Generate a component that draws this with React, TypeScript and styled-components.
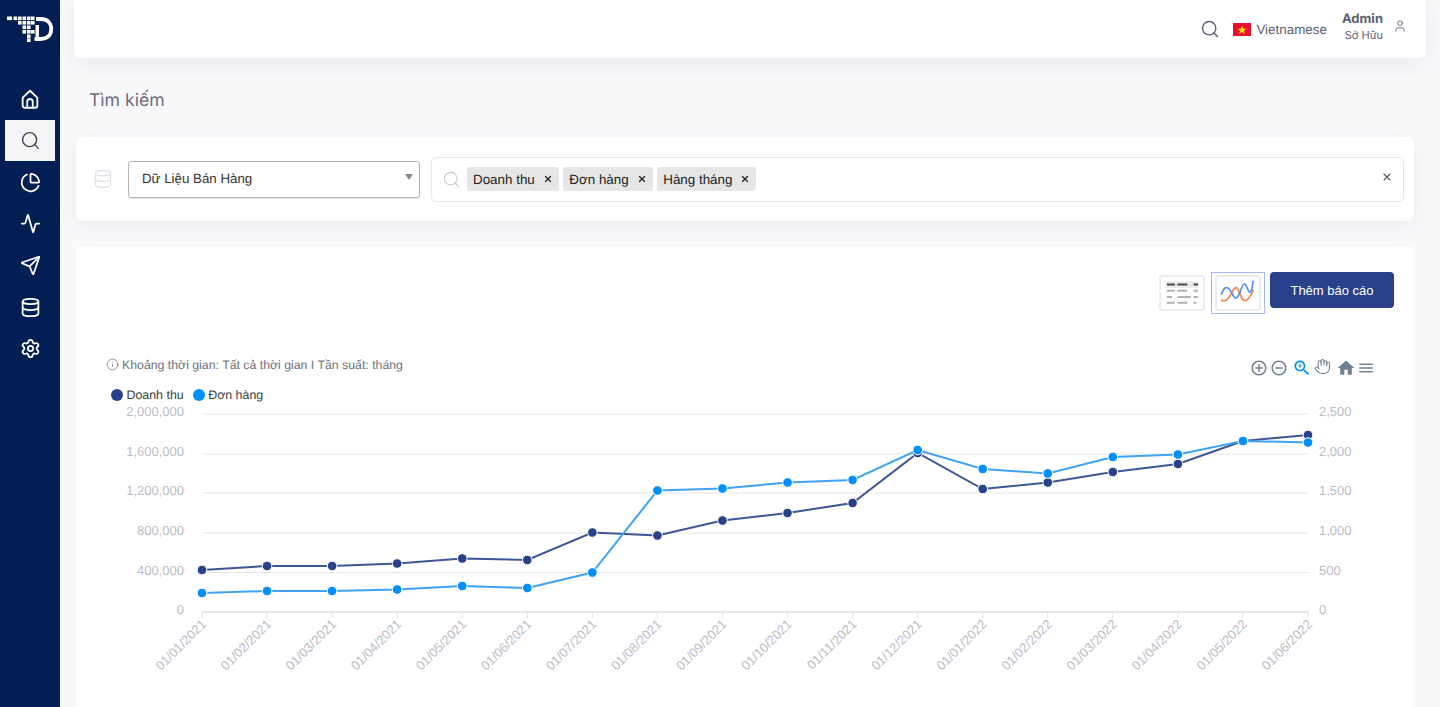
import React from "react";
import styled, { createGlobalStyle } from "styled-components";
import { Search, ChartPie, Activity, Send, Database, Settings, User, X, Info, Hand } from "lucide-react";

const Global = createGlobalStyle`
  html, body { margin: 0; padding: 0; height: 100%; background: #f8f8fb; overflow: hidden; }
  body { font-family: "Liberation Sans", Arial, sans-serif; text-rendering: geometricPrecision; }
  #root { height: 100%; }
`;

const Shell = styled.div`
  display: flex;
  width: 1440px;
  height: 707px;
  overflow: hidden;
`;
const Sidebar = styled.aside`
  flex: 0 0 60px;
  background: #031e52;
  display: flex;
  flex-direction: column;
  padding-top: 14px;
  box-sizing: border-box;
`;
const LogoMark = styled.svg`
  display: block;
  width: 50px;
  height: 28px;
  margin: 0 0 36px 5px;
`;
const Nav = styled.nav`
  display: flex;
  flex-direction: column;
  padding: 0 5px;
`;
const NavItem = styled.div<{ $active?: boolean }>`
  height: 41.7px;
  display: flex;
  align-items: center;
  justify-content: center;
  background: ${(p) => (p.$active ? "#f5f5f6" : "transparent")};
  color: ${(p) => (p.$active ? "#40475c" : "#ffffff")};
`;
const Main = styled.main`
  flex: 1;
  min-width: 0;
  padding: 0 14px;
  display: flex;
  flex-direction: column;
`;
const Header = styled.header`
  height: 58px;
  flex: none;
  background: #fff;
  border-radius: 0 0 6px 6px;
  box-shadow: 0 6px 20px rgba(60, 60, 90, 0.07);
  display: flex;
  align-items: center;
  justify-content: flex-end;
  color: #5c5f73;
  padding-right: 19px;
`;
const LangBlock = styled.div`
  display: flex;
  align-items: center;
  margin-left: 13px;
  font-size: 13.4px;
  color: #5c5f73;
`;
const Flag = styled.svg`
  width: 18px;
  height: 13px;
  margin-right: 5px;
`;
const UserBlock = styled.div`
  margin-left: 15px;
  margin-top: -4px;
  text-align: right;
  font-family: Inter, "Liberation Sans", sans-serif;
`;
const UserName = styled.div`
  font-size: 13px;
  font-weight: 700;
  line-height: 16px;
  margin-bottom: 1px;
  margin-top: -2px;
`;
const UserRole = styled.div`
  font-size: 11px;
  line-height: 14px;
`;
const UserIcon = styled.div`
  margin-left: 10px;
  margin-top: -6px;
  display: flex;
`;
const PageTitle = styled.h1`
  margin: 32px 0 0 15px;
  font-size: 17.6px;
  font-weight: 400;
  line-height: 22px;
  color: #6a6d7f;
  font-family: Inter, "Liberation Sans", sans-serif;
`;
const FilterCard = styled.section`
  margin: 25px 12px 0 2px;
  height: 84px;
  flex: none;
  background: #fff;
  border-radius: 6px;
  box-shadow: 0 6px 20px rgba(60, 60, 90, 0.06);
  display: flex;
  align-items: center;
  padding: 0 10px 0 17px;
  box-sizing: border-box;
  color: #dedee6;
`;
const SelectBox = styled.div`
  margin-left: 15px;
  width: 292px;
  height: 37px;
  flex: none;
  box-sizing: border-box;
  border: 1px solid #b5b5b8;
  border-radius: 3px;
  box-shadow: 0 1px 1px rgba(0, 0, 0, 0.12);
  display: flex;
  align-items: center;
  justify-content: space-between;
  padding: 0 6px 2px 13px;
  font-size: 13.3px;
  color: #333;
`;
const Caret = styled.span`
  width: 0;
  height: 0;
  border-left: 4px solid transparent;
  border-right: 4px solid transparent;
  border-top: 6px solid #8a8a8a;
  margin-top: -3px;
`;
const TagBox = styled.div`
  margin-left: 11px;
  flex: 1;
  height: 45px;
  box-sizing: border-box;
  border: 1px solid #e6e6ea;
  border-radius: 5px;
  display: flex;
  align-items: center;
  padding: 0 10px;
  position: relative;
  color: #c8c8d0;
`;
const Tag = styled.span`
  height: 24px;
  background: #e6e6e6;
  border-radius: 3px;
  display: inline-flex;
  align-items: center;
  margin-left: 4.5px;
  padding: 0 6px;
  font-size: 13.4px;
  color: #222;
  gap: 8px;
  &:first-of-type { margin-left: 6px; }
`;
const Clear = styled.span`
  margin-left: auto;
  margin-top: -5px;
  display: flex;
  color: #555;
`;
const ChartCard = styled.section`
  margin: 26px 12px 0 2px;
  flex: 1;
  background: #fff;
  display: flex;
  flex-direction: column;
  padding: 25px 20px 0 30px;
`;
const Actions = styled.div`
  display: flex;
  justify-content: flex-end;
  align-items: center;
  gap: 5px;
`;
const Thumb = styled.div<{ $active?: boolean }>`
  box-sizing: border-box;
  padding: ${(p) => (p.$active ? "2px 3px" : "0")};
  border: ${(p) => (p.$active ? "1px solid #a9b8f5" : "0")};
  margin-right: ${(p) => (p.$active ? "0" : "1px")};
`;
const ThumbInner = styled.svg`
  display: block;
  width: 46px;
  height: 36px;
  border: 2px solid #ececee;
  border-radius: 4px;
  box-sizing: border-box;
`;
const AddButton = styled.button`
  width: 124px;
  height: 36px;
  align-self: flex-start;
  border: 0;
  border-radius: 4px;
  background: #28418a;
  color: #fff;
  font-size: 13px;
  font-family: "Liberation Sans", sans-serif;
`;
const ChartHead = styled.div`
  display: flex;
  justify-content: space-between;
  align-items: center;
  margin-top: 44px;
  padding-right: 19px;
`;
const Note = styled.div`
  display: flex;
  align-items: center;
  gap: 3px;
  font-size: 12.3px;
  color: #6c6f7c;
  margin-top: -7px;
`;
const Tools = styled.div`
  display: flex;
  align-items: center;
  color: #6e8192;
`;
const ToolIcon = styled.svg<{ $w?: number; $on?: boolean; $ml?: number }>`
  width: ${(p) => p.$w ?? 18}px;
  height: ${(p) => p.$w ?? 18}px;
  margin-left: ${(p) => p.$ml ?? 0}px;
  fill: ${(p) => (p.$on ? "#008ffb" : "#6e8192")};
`;
const HandBox = styled.span`
  display: flex;
  margin: -3px 5.5px 0 2px;
`;
const Legend = styled.div`
  display: flex;
  align-items: center;
  margin-top: 9px;
  padding-left: 5px;
  font-size: 12.4px;
  color: #373d3f;
  line-height: 16px;
`;
const LegendItem = styled.span`
  display: inline-flex;
  align-items: center;
  gap: 3.5px;
  margin-right: 9px;
`;
const Dot = styled.i<{ $c: string }>`
  width: 12px;
  height: 12px;
  border-radius: 50%;
  background: ${(p) => p.$c};
`;
const ChartSvg = styled.svg`
  display: block;
  margin-left: -30px;
  margin-top: 1px;
  flex: none;
  text {
    font-family: "Liberation Sans", Arial, sans-serif;
    font-size: 13px;
    fill: #bcbcc6;
  }
`;

const labels = [
  "01/01/2021","01/02/2021","01/03/2021","01/04/2021","01/05/2021","01/06/2021",
  "01/07/2021","01/08/2021","01/09/2021","01/10/2021","01/11/2021","01/12/2021",
  "01/01/2022","01/02/2022","01/03/2022","01/04/2022","01/05/2022","01/06/2022",
];
const dark = [570,566,566,563.5,558.5,560,532.5,535.5,520.5,513,503,453,489,482.5,472,464,441,435];
const light = [593,591,591,589.5,586,588,572.5,490.5,488.5,482.5,480,450,469,473.5,457,454.5,441,442.5];
const left = ["2,000,000","1,600,000","1,200,000","800,000","400,000","0"];
const right = ["2,500","2,000","1,500","1,000","500","0"];
const gridY = [414, 454, 493, 533, 572.5, 612];

const OX = 76;
const OY = 404;
const xAt = (i: number) => 202 + i * 65.06 - OX;

const Series = ({ ys, color, line }: { ys: number[]; color: string; line: string }) => (
  <g>
    <polyline points={ys.map((y, i) => `${xAt(i)},${y - OY}`).join(" ")} fill="none" stroke={line} strokeWidth={2} />
    {ys.map((y, i) => (
      <circle key={i} cx={xAt(i)} cy={y - OY} r={4.8} fill={color} stroke="#fff" strokeWidth={1} />
    ))}
  </g>
);

const Chart = () => (
  <ChartSvg width={1338} height={303} viewBox="0 0 1338 303">
    {gridY.slice(0, 5).map((y) => (
      <line key={y} x1={126} x2={1232} y1={y - OY} y2={y - OY} stroke="#e6e6e8" strokeWidth={1} />
    ))}
    <line x1={126} x2={1232} y1={612 - OY} y2={612 - OY} stroke="#dedee0" strokeWidth={1.5} />
    {labels.map((_, i) => (
      <line key={i} x1={xAt(i)} x2={xAt(i)} y1={612 - OY} y2={618 - OY} stroke="#e0e0e2" />
    ))}
    {left.map((t, i) => (
      <text key={t} x={108} y={gridY[i] - OY + 2} textAnchor="end">{t}</text>
    ))}
    {right.map((t, i) => (
      <text key={t} x={1243} y={gridY[i] - OY + 2}>{t}</text>
    ))}
    {labels.map((t, i) => (
      <text key={t} textAnchor="end" transform={`translate(${xAt(i) + 5} ${625 - OY}) rotate(-45)`}>{t}</text>
    ))}
    <Series ys={dark} color="#28418a" line="#3f5694" />
    <Series ys={light} color="#008ffb" line="#3fa3f5" />
  </ChartSvg>
);

const HomeIcon = () => (
  <svg width="22" height="22" viewBox="0 0 24 24" fill="none" stroke="currentColor" strokeWidth="2" strokeLinejoin="round" strokeLinecap="round">
    <path d="M4 10.5 12 3l8 7.500V19a2.500 2.500 0 0 1-2.500 2.500h-11A2.500 2.500 0 0 1 4 19z" />
    <path d="M9 21.500V15a3 3 0 0 1 6 0v6.500" />
  </svg>
);

// Logo dots in the mark's own coordinates: a grid narrowing towards the D.
const colX = [8.5, 13, 17.5, 22, 26];
const rowY = [2.5, 7, 11.5, 16, 20.5, 24.5];
const logoRows: number[][] = [
  [0, 1, 2, 3, 4],
  [1, 2, 3, 4],
  [2, 3],
  [2, 3, 4],
  [3],
  [3],
];

const Logo = () => (
  <LogoMark viewBox="0 0 50 28">
    <rect x={2} y={2.5} width={5} height={3.6} fill="#fff" />
    {logoRows.map((cols, r) =>
      cols.map((c) => (
        <rect key={`${r}-${c}`} x={colX[c]} y={rowY[r]} width={3.6} height={3.6} fill="#fff" />
      ))
    )}
    <path d="M31 5h4.500C42.500 5 46.200 9 46.200 15s-3.700 10-10.700 10H29.500" fill="none" stroke="#fff" strokeWidth="3.800" />
    <rect x="30.500" y="11" width="3.500" height="15" fill="#fff" />
  </LogoMark>
);

const wave1 = "M4 20C8 9 12 10 16 18S22 26 26 15 31 7 34 14 39 15 40 4";
const wave2 = "M4 26C9 29 13 24 17 16S23 13 26 21 33 28 37 21 39 18 40 14";

export default function App() {
  return (
    <Shell>
      <Global />
      <Sidebar>
        <Logo />
        <Nav>
          <NavItem><HomeIcon /></NavItem>
          <NavItem $active><Search size={21} strokeWidth={1.6} /></NavItem>
          <NavItem><ChartPie size={21} strokeWidth={2} /></NavItem>
          <NavItem><Activity size={21} strokeWidth={2} /></NavItem>
          <NavItem><Send size={21} strokeWidth={2} /></NavItem>
          <NavItem><Database size={21} strokeWidth={2} /></NavItem>
          <NavItem><Settings size={21} strokeWidth={2} /></NavItem>
        </Nav>
      </Sidebar>
      <Main>
        <Header>
          <Search size={20} strokeWidth={1.7} />
          <LangBlock>
            <Flag viewBox="0 0 18 13">
              <rect width="18" height="13" fill="#e8112d" />
              <polygon points="9,2.500 10.200,5.700 13.500,5.700 10.800,7.700 11.800,11 9,9 6.200,11 7.200,7.700 4.500,5.700 7.800,5.700" fill="#ffe000" />
            </Flag>
            Vietnamese
          </LangBlock>
          <UserBlock>
            <UserName>Admin</UserName>
            <UserRole>Sở Hữu</UserRole>
          </UserBlock>
          <UserIcon><User size={14} strokeWidth={1.5} /></UserIcon>
        </Header>
        <PageTitle>Tìm kiếm</PageTitle>
        <FilterCard>
          <Database size={20} strokeWidth={1.5} />
          <SelectBox>
            Dữ Liệu Bán Hàng
            <Caret />
          </SelectBox>
          <TagBox>
            <Search size={19} strokeWidth={1.3} />
            <Tag>Doanh thu <X size={10} strokeWidth={3} color="#222" /></Tag>
            <Tag>Đơn hàng <X size={10} strokeWidth={3} color="#222" /></Tag>
            <Tag>Hàng tháng <X size={10} strokeWidth={3} color="#222" /></Tag>
            <Clear><X size={12} strokeWidth={2.2} /></Clear>
          </TagBox>
        </FilterCard>
        <ChartCard>
          <Actions>
            <Thumb>
              <ThumbInner viewBox="0 0 46 36">
                <rect x="4" y="5" width="38" height="7" fill="#e8e8e8" />
                <path d="M6 8.500h9M18 8.500h11M36 8.500h5" stroke="#4a4a4a" strokeWidth="2.400" />
                <path d="M6 15.500h9M18 15.500h11M36 15.500h5M6 22.500h6M18 22.500h15M36 22.500h5M6 29h9M18 29h11M36 29h3" stroke="#b0b0b0" strokeWidth="2.400" />
              </ThumbInner>
            </Thumb>
            <Thumb $active>
              <ThumbInner viewBox="0 0 46 36">
                <path d={wave2} fill="none" stroke="#f28a4b" strokeWidth="2" />
                <path d={wave1} fill="none" stroke="#5b93f5" strokeWidth="2" />
              </ThumbInner>
            </Thumb>
            <AddButton>Thêm báo cáo</AddButton>
          </Actions>
          <ChartHead>
            <Note>
              <Info size={13} strokeWidth={1.4} />
              Khoảng thời gian: Tất cả thời gian I Tần suất: tháng
            </Note>
            <Tools>
              <ToolIcon viewBox="0 0 24 24"><path d="M13 7h-2v4H7v2h4v4h2v-4h4v-2h-4V7zm-1-5C6.480 2 2 6.480 2 12s4.480 10 10 10 10-4.480 10-10S17.520 2 12 2zm0 18c-4.410 0-8-3.590-8-8s3.590-8 8-8 8 3.590 8 8-3.590 8-8 8z" /></ToolIcon>
              <ToolIcon $ml={1.5} viewBox="0 0 24 24"><path d="M7 11v2h10v-2H7zm5-9C6.480 2 2 6.480 2 12s4.480 10 10 10 10-4.480 10-10S17.520 2 12 2zm0 18c-4.410 0-8-3.590-8-8s3.590-8 8-8 8 3.590 8 8-3.590 8-8 8z" /></ToolIcon>
              <ToolIcon $on $w={20} $ml={4} viewBox="0 0 24 24"><path d="M15.500 14h-.79l-.28-.27C15.410 12.590 16 11.110 16 9.500 16 5.910 13.090 3 9.500 3S3 5.910 3 9.500 5.910 16 9.500 16c1.610 0 3.090-.59 4.230-1.570l.27.28v.79l5 4.990L20.490 19l-4.990-5zm-6 0C7.010 14 5 11.990 5 9.500S7.010 5 9.500 5 14 7.010 14 9.500 11.990 14 9.500 14z" /><path d="M12 10h-2v2H9v-2H7V9h2V7h1v2h2v1z" /></ToolIcon>
              <HandBox><Hand size={17} strokeWidth={1.5} /></HandBox>
              <ToolIcon $w={20} viewBox="0 0 24 24"><path d="M10 20v-6h4v6h5v-8h3L12 3 2 12h3v8z" /></ToolIcon>
              <ToolIcon $w={18} $ml={1} viewBox="0 0 24 24"><path d="M3 18h18v-2H3v2zm0-5h18v-2H3v2zm0-7v2h18V6H3z" /></ToolIcon>
            </Tools>
          </ChartHead>
          <Legend>
            <LegendItem><Dot $c="#28418a" />Doanh thu</LegendItem>
            <LegendItem><Dot $c="#008ffb" />Đơn hàng</LegendItem>
          </Legend>
          <Chart />
        </ChartCard>
      </Main>
    </Shell>
  );
}
